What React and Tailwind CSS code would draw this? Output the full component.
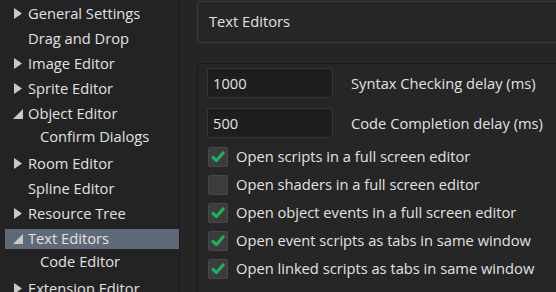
import React from "react";

const tree = [
  { label: "General Settings", arrow: "closed" },
  { label: "Drag and Drop" },
  { label: "Image Editor", arrow: "closed" },
  { label: "Sprite Editor", arrow: "closed" },
  { label: "Object Editor", arrow: "open" },
  { label: "Confirm Dialogs", child: true },
  { label: "Room Editor", arrow: "closed" },
  { label: "Spline Editor" },
  { label: "Resource Tree", arrow: "closed" },
  { label: "Text Editors", arrow: "open", selected: true },
  { label: "Code Editor", child: true },
  { label: "Extension Editor", arrow: "closed" },
];

const options = [
  { label: "Open scripts in a full screen editor", checked: true },
  { label: "Open shaders in a full screen editor", checked: false },
  { label: "Open object events in a full screen editor", checked: true },
  { label: "Open event scripts as tabs in same window", checked: true },
  { label: "Open linked scripts as tabs in same window", checked: true },
];

function Arrow({ type }) {
  if (type === "closed") {
    return (
      <svg width="8" height="11" viewBox="0 0 8 11" className="shrink-0">
        <path d="M0 0 L8 5.5 L0 11 Z" fill="#c9c9c9" />
      </svg>
    );
  }
  return (
    <svg width="10" height="10" viewBox="0 0 10 10" className="shrink-0">
      <path d="M10 0 L10 10 L0 10 Z" fill="#c9c9c9" />
    </svg>
  );
}

function TreeItem({ item }) {
  return (
    <div className="h-[25px] flex items-center">
      <div
        className={`flex items-center h-[20px] w-full ml-[5px] ${
          item.selected ? "bg-[#5f6a78]" : ""
        }`}
      >
        <div className="w-[23px] flex justify-center pl-[3px] shrink-0">
          {item.arrow && <Arrow type={item.arrow} />}
        </div>
        <span className={`whitespace-nowrap ${item.child ? "pl-[12px] -mt-[4px]" : "-mt-[1px]"}`}>
          {item.label}
        </span>
      </div>
    </div>
  );
}

function Checkbox({ checked }) {
  return (
    <div className="w-[20px] h-[20px] rounded-[2px] border border-[#484848] bg-[#3c3c3c] flex items-center justify-center shrink-0">
      {checked && (
        <svg width="14" height="12" viewBox="0 0 14 12">
          <path
            d="M2 6.5 L5.5 9.5 L12 2"
            fill="none"
            stroke="#19b35a"
            strokeWidth="3.2"
            strokeLinecap="round"
            strokeLinejoin="round"
          />
        </svg>
      )}
    </div>
  );
}

export default function App() {
  return (
    <div
      className="w-[556px] h-[292px] overflow-hidden flex bg-[#252525] text-[#e1e1e1] text-[14.7px]"
      style={{ fontFamily: '"Open Sans", "Noto Sans", sans-serif' }}
    >
      <div className="w-[180px] shrink-0 h-full bg-[#232323] border-r border-[#1a1a1a] pt-[1px]">
        {tree.map((item) => (
          <TreeItem key={item.label} item={item} />
        ))}
      </div>

      <div className="flex-1 flex flex-col pl-[17px] min-w-0">
        <div className="mt-[1px] h-[42px] -mr-[10px] rounded-[4px] border border-[#3a3a3a] bg-[#262626] flex items-center pl-[11px]">
          <span className="-mt-[2px]">Text Editors</span>
        </div>

        <div className="mt-[20px] flex-1 -mr-[10px] rounded-tl-[4px] border-l border-t border-[#191919] bg-[#262626] pl-[9px] pt-[4px]">
          <div className="flex items-center">
            <div className="w-[126px] h-[30px] rounded-[2px] border border-[#363636] bg-[#1e1e1e] flex items-center pl-[5px]">
              1000
            </div>
            <span className="ml-[18px]">Syntax Checking delay (ms)</span>
          </div>
          <div className="flex items-center mt-[10px]">
            <div className="w-[126px] h-[30px] rounded-[2px] border border-[#363636] bg-[#1e1e1e] flex items-center pl-[5px]">
              500
            </div>
            <span className="ml-[18px]">Code Completion delay (ms)</span>
          </div>

          <div className="mt-[5px] flex flex-col">
            {options.map((o) => (
              <div key={o.label} className="h-[28px] flex items-center pl-[1px]">
                <Checkbox checked={o.checked} />
                <span className="ml-[8px] whitespace-nowrap -mt-[1px]">{o.label}</span>
              </div>
            ))}
          </div>
        </div>
      </div>
    </div>
  );
}
